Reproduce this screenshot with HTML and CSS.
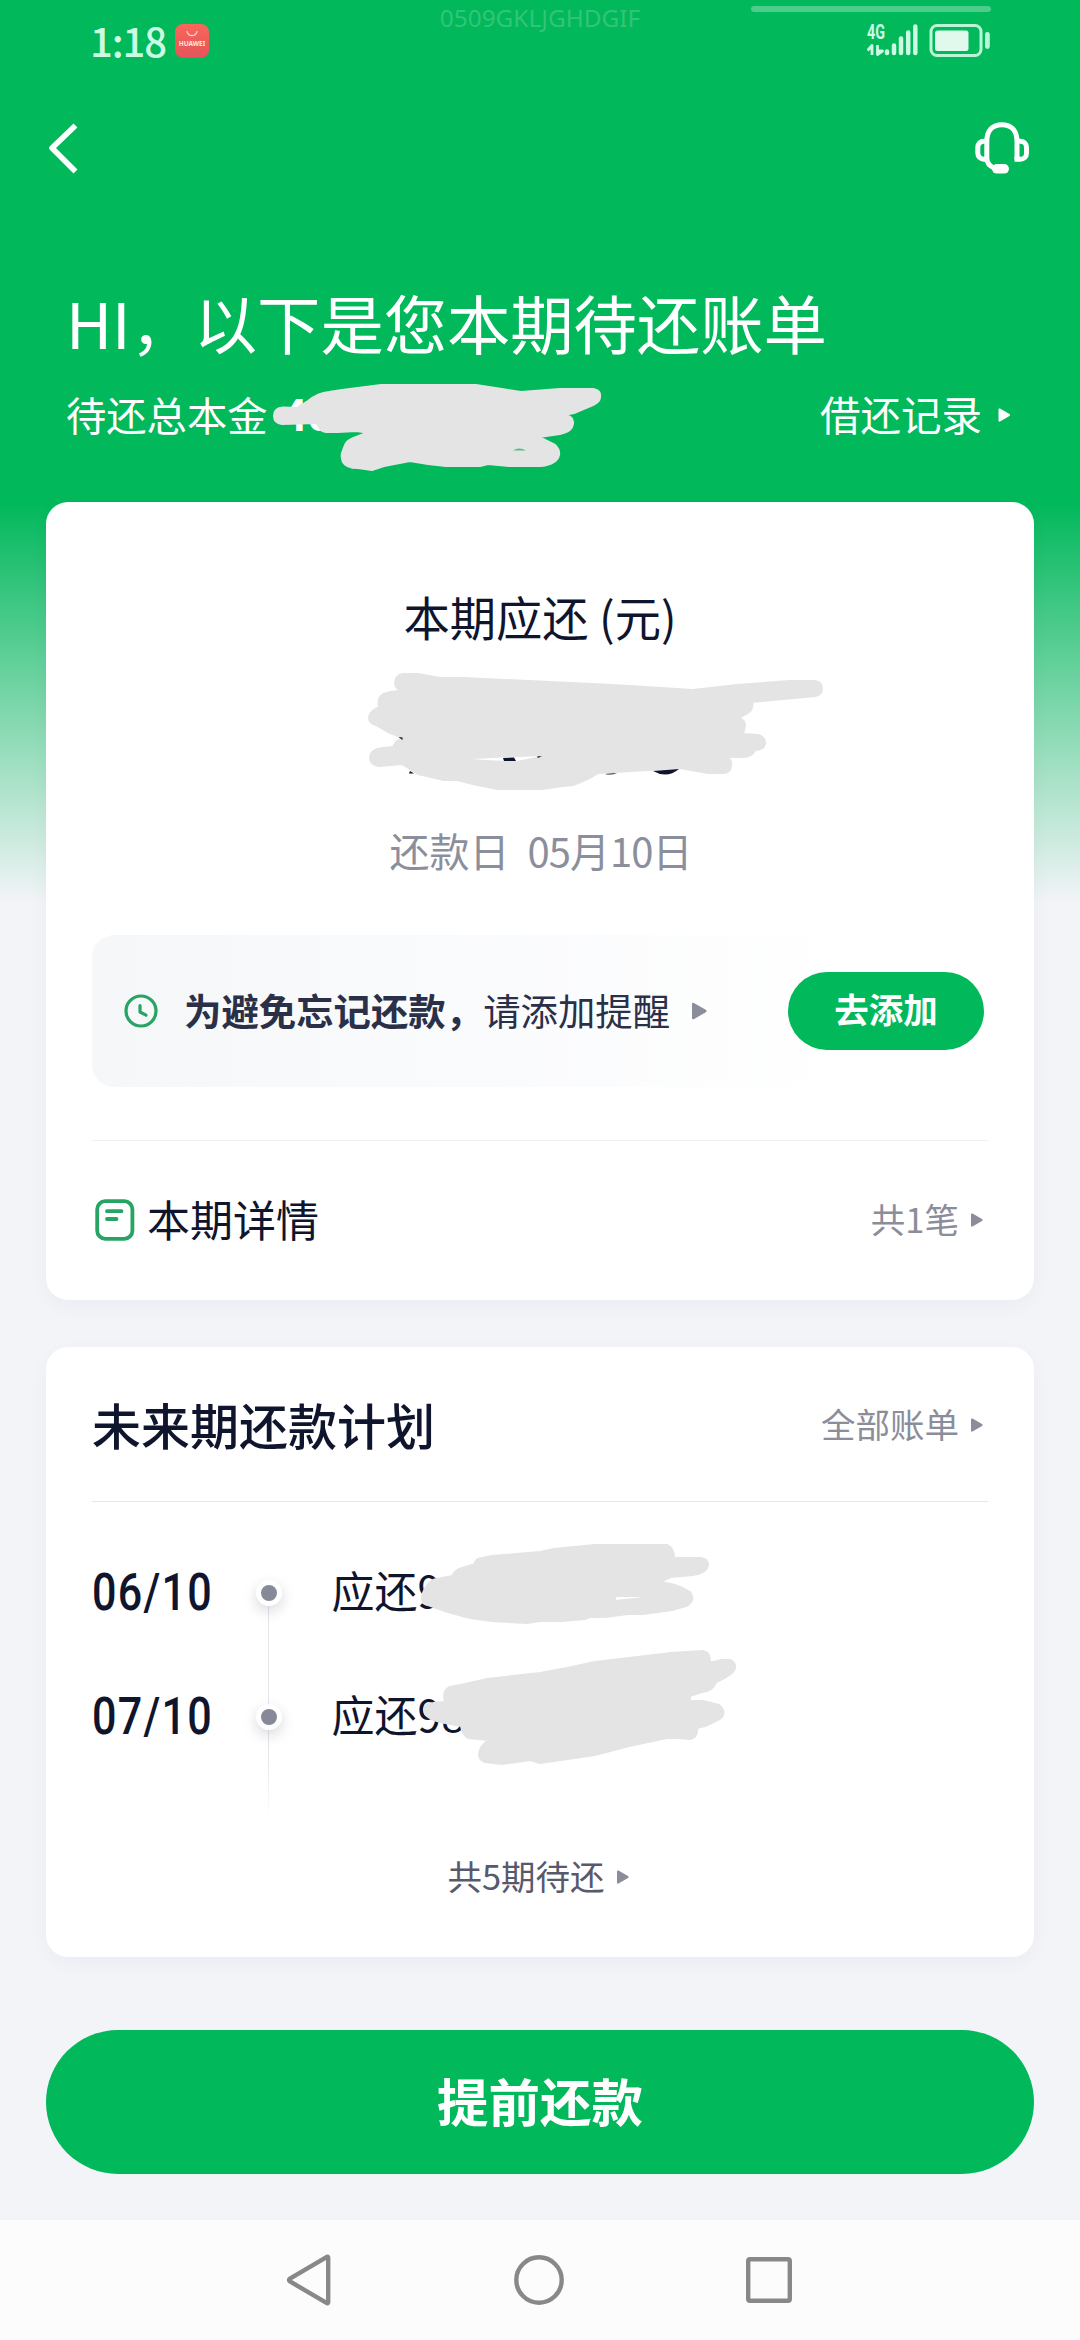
FILE: index.html
```html
<!DOCTYPE html>
<html lang="zh-CN">
<head>
<meta charset="utf-8">
<title>本期待还账单</title>
<link rel="stylesheet" href="styles.css">
</head>
<body>
<div class="page">
  <div class="watermark">0509GKLJGHDGIF</div>
  <div class="top-handle"></div>

  <header class="status">
    <div class="status-left">
      <span class="time">1:18</span>
      <span class="app-badge">
        <svg width="12" height="7" viewBox="0 0 12 7"><path d="M1 1a5 4.6 0 0 0 10 0" fill="none" stroke="#ffd0c8" stroke-width="1.2"/></svg>
        <b>HUAWEI</b>
      </span>
    </div>
    <svg class="status-icons" width="124" height="36" viewBox="867 23 124 36">
      <text x="867" y="39" class="net" textLength="18" lengthAdjust="spacingAndGlyphs">4G</text>
      <path d="M867.5 50.500L872 45.500v9.500M877.500 45v9.500L882.500 51h-5" fill="none" stroke="#ccfbe3" stroke-width="2.800" stroke-linejoin="round"/>
      <g stroke="#ccfbe3" stroke-width="4.500" stroke-linecap="round">
        <path d="M887 51.500v1.500M894 45.500V53M901 38.500V53M908.200 32.500V53M915.300 26.500V53"/>
      </g>
      <rect x="931" y="25.500" width="50" height="30" rx="6" fill="none" stroke="#b9f5d6" stroke-width="3"/>
      <rect x="935" y="30.500" width="33.500" height="20.500" rx="2.500" fill="#e0f9ec"/>
      <rect x="985" y="32" width="4.800" height="17" rx="2.400" fill="#b9f5d6"/>
    </svg>
  </header>

  <nav class="toolbar">
    <svg width="32" height="52" viewBox="47 121 32 52"><path d="M75.500 124.500L52 147l23.500 23.500" fill="none" stroke="#fff" stroke-width="5.600" stroke-linejoin="round"/></svg>
    <svg width="56" height="54" viewBox="974 121 56 54">
      <g fill="none" stroke="#fff" stroke-width="5">
        <path d="M986.800 141.500C986.800 130 993 124.700 1001.900 124.700S1017 130 1017 141.500V159.500"/>
        <path d="M986.800 141V158C986.800 163 989 166 995 168.500"/>
        <path d="M986 141.200h-2a6 6 0 0 0-6.200 6v6a6 6 0 0 0 6.200 6h2M1017 141.200h3.500a6 6 0 0 1 6 6v6a6 6 0 0 1-6 6H1014.500"/>
      </g>
      <rect x="992" y="164" width="17" height="9.600" rx="4.800" fill="#fff"/>
    </svg>
  </nav>

  <section class="hero">
    <h1 class="label">HI，以下是您本期待还账单</h1>
    <div class="hero-row">
      <div class="principal"><span class="label">待还总本金</span><b>40</b></div>
      <a class="records"><span class="label">借还记录</span>
        <svg class="tri" width="13" height="14" viewBox="0 0 12 14"><path d="M0 1.500Q0 0 1.500.5L11 6Q12.300 7 11 8L1.500 13.500Q0 14 0 12.500Z"/></svg></a>
    </div>
  </section>

  <main>
    <section class="card current">
      <h2 class="label">本期应还 (元)</h2>
      <div class="due"><span class="label">还款日</span><span class="label"><i>05</i>月<i>10</i>日</span></div>
      <div class="notice">
        <svg width="34" height="34" viewBox="0 0 34 34" fill="none" stroke="#27a463" stroke-width="3.200" stroke-linecap="round" stroke-linejoin="round"><circle cx="17" cy="17" r="15"/><path d="M16 11.500v6.500l6 3.200"/></svg>
        <p class="label"><b>为避免忘记还款，</b>请添加提醒</p>
        <svg class="tri" width="15" height="18" viewBox="0 0 12 14"><path d="M0 1.500Q0 0 1.500.5L11 6Q12.300 7 11 8L1.500 13.500Q0 14 0 12.500Z"/></svg>
        <button class="add"><span class="label">去添加</span></button>
      </div>
      <div class="detail">
        <svg width="40" height="42" viewBox="0 0 40 42" fill="none" stroke="#27a463" stroke-width="3.800" stroke-linecap="round"><rect x="2.200" y="2.200" width="35.200" height="37.600" rx="8"/><path d="M12 12.200h14.500M12 20h9.500"/></svg>
        <h3 class="label">本期详情</h3>
        <span class="more"><span class="label">共1笔</span>
          <svg class="tri" width="12" height="14" viewBox="0 0 12 14"><path d="M0 1.500Q0 0 1.500.5L11 6Q12.300 7 11 8L1.500 13.500Q0 14 0 12.500Z"/></svg></span>
      </div>
    </section>

    <section class="card plan">
      <div class="plan-head">
        <h2 class="label">未来期还款计划</h2>
        <span class="more"><span class="label">全部账单</span>
          <svg class="tri" width="12" height="14" viewBox="0 0 12 14"><path d="M0 1.500Q0 0 1.500.5L11 6Q12.300 7 11 8L1.500 13.500Q0 14 0 12.500Z"/></svg></span>
      </div>
      <ul class="timeline">
        <li><span class="date"><i>06/10</i></span><span class="dot"></span><span class="owed label">应还9</span></li>
        <li><span class="date"><i>07/10</i></span><span class="dot"></span><span class="owed label">应还98</span></li>
      </ul>
      <div class="total"><span class="label">共5期待还</span>
        <svg class="tri" width="12" height="14" viewBox="0 0 12 14"><path d="M0 1.500Q0 0 1.500.5L11 6Q12.300 7 11 8L1.500 13.500Q0 14 0 12.500Z"/></svg></div>
    </section>

    <button class="repay"><span class="label">提前还款</span></button>
  </main>

  <footer class="sysnav">
    <svg width="46" height="52" viewBox="286 2254 46 52"><path d="M328.200 2257.500v45a.8.8 0 0 1-1.300.6L290 2281.500q-2-1.500 0-3l36.900-21.600a.8.8 0 0 1 1.300.6z"/></svg>
    <svg width="52" height="52" viewBox="0 0 52 52"><circle cx="26" cy="26" r="22.700"/></svg>
    <svg width="46" height="46" viewBox="0 0 46 46"><rect x="2.200" y="2.200" width="41.600" height="41.600" rx="1.800"/></svg>
  </footer>

  <!-- hand-drawn strokes masking the amounts -->
  <svg class="masks" width="1080" height="2340" viewBox="0 0 1080 2340">
    <g fill="#e4e4e4" stroke="#e4e4e4" stroke-width="2" stroke-linejoin="round">
      <path d="M274 416Q274 408 283 407.500L297 408 308 401Q318 393 329 392L342 390 381 385H476L521 392 560 389H593Q601 390 600 397 600 402 593 405L574 413 564 415Q574 416 573 424 572 432 560 434L539 437 555 445Q560 450 559 455 557 464 541 466H509L488 464 480 466H446L428 464 410 461 384 466 372 470 358 468Q346 468 343 462 341 458 342 453L345 445Q347 440 356 437L372 431 363 432 356 431 338 432H326Q320 432 317 423L282 424Q274 423 274 416Z"/>
      <path d="M403 674H418L440 678 463 678 613 685 693 690 737 685 790 681H815Q822 682 822 689 822 695 815 696L752 702Q754 710 746 714L739 718Q745 720 745 726L743 734 758 735Q765 737 765 743 764 750 755 750 752 757 742 757H727Q732 760 731 766 730 773 723 773H708L680 768 648 770 598 773Q588 780 573 785L563 786 542 789H498L477 785 457 780H444L418 774 402 764 380 766Q370 765 370 757 371 749 383 748L393 747Q396 740 403 738L388 732 376 725Q369 723 369 718 369 712 379 707 377 697 384 694 391 691 402 691 395 689 395 682 396 675 403 674Z"/>
      <path d="M422 1596Q424 1589 427 1586 430 1580 437 1579L452 1576Q456 1569 462 1568L474 1564.500Q476 1558 482 1558L492 1556 540 1552 554 1549 595 1545H667Q674 1548 674 1558H701Q708 1559 708 1565 707 1573 693 1575L671 1577 664 1580 653 1581Q676 1583 690 1592 696 1601 686 1606L672 1610 643 1614H628L605 1617H590L585 1619 561 1621H540L527 1623 492 1621 470 1618 448 1612 428 1605Q421 1603 422 1596Z"/>
      <path d="M424 1709Q426 1703 433 1703L445 1702Q442 1690 450 1687L465 1684 487 1679 540 1673 567 1668 595 1662 671 1653 703 1651Q710 1652 710 1662L714 1662 721 1660H730Q736 1663 735 1668 734 1674 716 1682 713 1691 702 1692L690 1696V1701H703L719 1705Q726 1711 722 1717 719 1720 705 1726L697 1728Q698 1737 690 1739L679 1738H667L629 1746 595 1755 554 1761 540 1763 530 1760 502 1764 485 1762Q479 1760 479 1754 480 1745 489 1740L468 1738Q462 1734 461 1726L440 1722Q424 1718 424 1709Z"/>
    </g>
    <path d="M513 450.500q6-4 13 0z" fill="#53bd83"/>
    <path d="M471 759l70-3-24 5q-23 0-46-2zM616 1597h27l-27 3z" fill="#fff"/>
    <path d="M398.500 737l4 .5v2.500zM410 771l4 2.500h-5zM503 758l11-.5 2 3.500h-12zM537 756.500l5-.5-4 2zM605 774l12-1q-6 2.500-12 1zM653 771l26-2q-12 10-26 2z" fill="#10152e"/>
  </svg>
</div>
</body>
</html>
```
FILE: styles.css
```css
* { box-sizing: border-box; margin: 0; padding: 0; }

body {
  font-family: "Noto Sans CJK SC", "Noto Sans", sans-serif;
  color: #10152e;
}

h1, h2, h3 { font-weight: 400; }
i { font-style: normal; }
ul { list-style: none; }
button { border: 0; font-family: inherit; background: #01b85b; color: #fff; }
svg { display: block; flex: none; }

.page {
  position: relative;
  display: flex;
  flex-direction: column;
  width: 1080px;
  height: 2340px;
  overflow: hidden;
  background: linear-gradient(#01b85b 0, #01b85b 502px, #f3f4f8 904px);
}

.label { margin-top: -.06em; white-space: nowrap; line-height: 1.5; }

.tri { fill: #8b8d9b; }

.watermark {
  position: absolute;
  top: 0;
  left: 390px;
  width: 300px;
  font: 24.400px/36px "Noto Sans", sans-serif;
  color: rgba(255, 255, 255, .2);
  text-align: center;
  white-space: nowrap;
}
.top-handle {
  position: absolute;
  top: 6px;
  left: 751px;
  width: 240px;
  height: 6px;
  border-radius: 3px;
  background: rgba(255, 255, 255, .3);
}

.status {
  display: flex;
  justify-content: space-between;
  align-items: center;
  height: 82px;
  padding: 0 89px 0 90px;
}
.status-left { display: flex; align-items: center; gap: 10px; }
.time {
  width: 75px;
  font: 500 40px/40px "Noto Sans CJK SC", sans-serif;
  letter-spacing: -1.100px;
  color: #ccfbe3;
  margin-top: -2px;
  white-space: nowrap;
}
.app-badge {
  display: flex;
  flex-direction: column;
  align-items: center;
  gap: 3px;
  width: 34px;
  height: 34px;
  padding-top: 6px;
  border-radius: 8px;
  background: linear-gradient(#f8675b, #e4545b);
}
.app-badge b { font: 700 6.500px/8px "Noto Sans", sans-serif; color: #ffe4de; }
.net { font: 700 20px "Roboto", sans-serif; fill: #ccfbe3; }

.toolbar {
  display: flex;
  justify-content: space-between;
  align-items: center;
  height: 131px;
  padding: 0 50px 0 47px;
}

.hero { height: 289px; padding: 67px 69px 0 66px; }
.hero h1 {
  height: 90px;
  margin-top: 0;
  font-size: 63.400px;
  line-height: 83px;
  letter-spacing: -.1px;
  color: #fff;
}
.hero-row {
  display: flex;
  justify-content: space-between;
  align-items: center;
  height: 60px;
  margin-top: 16px;
  padding-bottom: 1px;
  font-size: 40.300px;
  color: #fff;
}
.principal, .records { display: flex; align-items: center; }
.principal b { margin-left: 14px; font: 700 45px/50px "Roboto", sans-serif; }
.records { gap: 16px; font-size: 40.500px; }
.records .tri { fill: #fff; }

main { display: flex; flex-direction: column; height: 1718px; padding: 0 46px; }

.card {
  padding: 0 46px;
  border-radius: 22px;
  background: #fff;
  box-shadow: 0 6px 20px rgba(30, 35, 70, .035);
}

.current { height: 798px; padding-top: 84px; }
.current h2 {
  margin-top: 0;
  font-size: 46.300px;
  line-height: 60px;
  text-align: center;
}
.due {
  display: flex;
  justify-content: center;
  align-items: center;
  gap: 18px;
  height: 50px;
  margin-top: 180px;
  padding-left: 2px;
  font-size: 40px;
  color: #8b8f9c;
}
.due i { letter-spacing: -1px; }

.notice {
  display: flex;
  align-items: center;
  height: 152px;
  margin-top: 59px;
  padding: 0 4px 0 32px;
  border-radius: 22px;
  background: linear-gradient(90deg, #f5f7f9, #f9fafc 35%, #fff 85%);
  color: #2b3049;
}
.notice p { margin-left: 26px; font-size: 37.400px; }
.notice .tri { margin-left: 22px; }
.add {
  display: flex;
  align-items: center;
  justify-content: center;
  width: 196px;
  height: 78px;
  margin-left: auto;
  border-radius: 39px;
  font-size: 34.500px;
  font-weight: 700;
}
.add .label { margin-top: -.13em; }

.detail {
  display: flex;
  align-items: center;
  height: 158px;
  margin-top: 53px;
  padding-left: 3px;
  border-top: 1px solid #eff1f7;
}
.detail h3 { margin-left: 12px; font-size: 43px; }
.more {
  display: flex;
  align-items: center;
  gap: 12px;
  margin-left: auto;
  padding-right: 5px;
  font-size: 34.500px;
  color: #8b8d9b;
}

.plan { height: 610px; margin-top: 47px; }
.plan-head {
  display: flex;
  align-items: center;
  height: 155px;
  padding-top: 2px;
  border-bottom: 1px solid #e6e7ea;
}
.plan-head h2 { font-size: 49px; font-weight: 500; }

.timeline {
  height: 321px;
  padding-top: 29px;
  background: linear-gradient(#e6e6e9, #e6e6e9 70%, #fff) 176px 104px / 1px 216px no-repeat;
}
.timeline li { display: flex; align-items: center; height: 124px; }
.date { width: 164px; }
.date i {
  display: inline-block;
  font: 500 51px/60px "Roboto", sans-serif;
  letter-spacing: 1.500px;
  transform: scaleX(.845);
  transform-origin: 0 50%;
}
.dot {
  width: 26px;
  height: 26px;
  border: 5px solid #fff;
  border-radius: 50%;
  background: #868a98;
  box-shadow: 0 5px 14px rgba(20, 20, 50, .16);
}
.owed { margin-left: 49.500px; margin-top: -.17em; font-size: 43px; }

.total {
  display: flex;
  justify-content: center;
  align-items: center;
  gap: 12px;
  height: 108px;
  padding-right: 4px;
  font-size: 34.500px;
  color: #575a6c;
}

.repay {
  display: flex;
  align-items: center;
  justify-content: center;
  height: 144px;
  margin-top: 73px;
  border-radius: 72px;
  font-size: 51.500px;
  font-weight: 700;
}
.repay .label { margin-top: -.1em; }

.sysnav {
  display: flex;
  justify-content: space-between;
  align-items: center;
  height: 120px;
  padding: 0 288px 0 286px;
  background: #fcfcfc;
}
.sysnav svg { fill: none; stroke: #888; stroke-width: 4.400; }

.masks { position: absolute; inset: 0; pointer-events: none; }
```
